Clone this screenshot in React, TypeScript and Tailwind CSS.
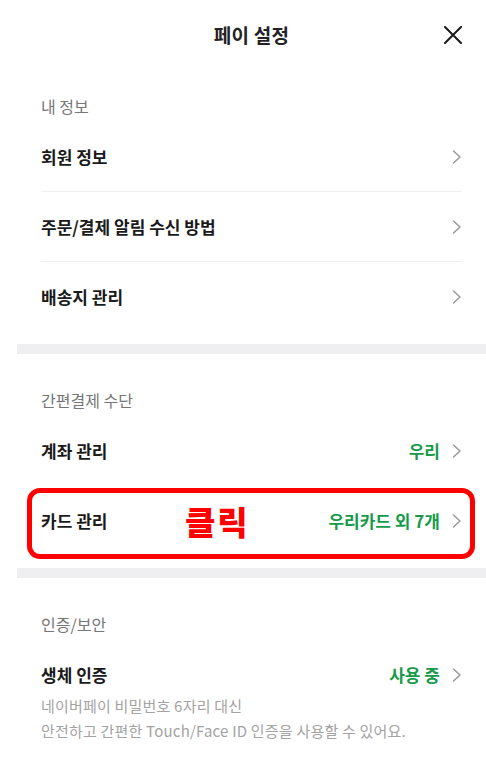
import React from 'react';

const FONT = { fontFamily: '"Noto Sans CJK KR", "Noto Sans", sans-serif' };

function Chevron() {
  return (
    <svg width="10" height="14" viewBox="0 0 10 14" fill="none" className="shrink-0">
      <path d="M1.5 1 L8 7 L1.5 13" stroke="#9a9a9a" strokeWidth="1.5" strokeLinecap="round" strokeLinejoin="round" />
    </svg>
  );
}

interface RowProps {
  label: string;
  value?: string;
  border?: boolean;
  children?: React.ReactNode;
}

function Row({ label, value, border, children }: RowProps) {
  return (
    <div className={`relative flex h-[70px] items-center justify-between ${border ? 'border-b border-[#f0f0f0]' : ''}`}>
      <span className="text-[17px] font-bold tracking-[0px] text-[#1a1a1a]">{label}</span>
      <div className="flex items-center gap-[12px]">
        {value && <span className="text-[17px] font-bold tracking-[0px] text-[#179b4a]">{value}</span>}
        <Chevron />
      </div>
      {children}
    </div>
  );
}

function SectionLabel({ text, top }: { text: string; top: string }) {
  return <div className={`${top} mb-[6px] h-[20px] text-[16px] leading-[20px] tracking-[0px] text-[#767676]`}>{text}</div>;
}

export default function App() {
  return (
    <div className="min-h-screen w-full bg-white" style={FONT}>
      <div className="ml-[17px]">
        {/* header */}
        <div className="flex h-[70px] items-center px-6">
          <div className="w-[18px]" />
          <div className="flex-1 text-center text-[19px] font-bold tracking-[0.3px] text-[#222]">페이 설정</div>
          <svg width="18" height="18" viewBox="0 0 18 18" className="shrink-0">
            <path d="M1 1 L17 17 M17 1 L1 17" stroke="#1a1a1a" strokeWidth="2" strokeLinecap="round" />
          </svg>
        </div>

        {/* 내 정보 */}
        <div className="px-6 pb-[12px]">
          <SectionLabel text="내 정보" top="mt-[26px]" />
          <Row label="회원 정보" border />
          <Row label="주문/결제 알림 수신 방법" border />
          <Row label="배송지 관리" />
        </div>
        <div className="h-[10px] bg-[#efeff1]" />

        {/* 간편결제 수단 */}
        <div className="px-6 pb-[12px]">
          <SectionLabel text="간편결제 수단" top="mt-[36px]" />
          <Row label="계좌 관리" value="우리" />
          <Row label="카드 관리" value="우리카드 외 7개">
            <div className="pointer-events-none absolute -left-[14px] -right-[13px] top-[2px] -bottom-[3px] rounded-[13px] border-[5px] border-[#ff0000]" />
            <span className="absolute left-[144px] top-[13px] text-[33px] font-black leading-[44px] tracking-[2px] text-[#ff0000]">클릭</span>
          </Row>
        </div>
        <div className="h-[10px] bg-[#efeff1]" />

        {/* 인증/보안 */}
        <div className="px-6 pb-[20px]">
          <SectionLabel text="인증/보안" top="mt-[36px]" />
          <div className="flex items-center justify-between pt-[23px]">
            <span className="text-[17px] font-bold leading-[24px] tracking-[0px] text-[#1a1a1a]">생체 인증</span>
            <div className="flex items-center gap-[12px]">
              <span className="text-[17px] font-bold leading-[24px] tracking-[0px] text-[#179b4a]">사용 중</span>
              <Chevron />
            </div>
          </div>
          <p className="mt-[6px] text-[15px] leading-[25px] tracking-[0.2px] text-[#a3a3a3]">
            네이버페이 비밀번호 6자리 대신
            <br />
            안전하고 간편한 Touch/Face ID 인증을 사용할 수 있어요.
          </p>
        </div>
      </div>
    </div>
  );
}
